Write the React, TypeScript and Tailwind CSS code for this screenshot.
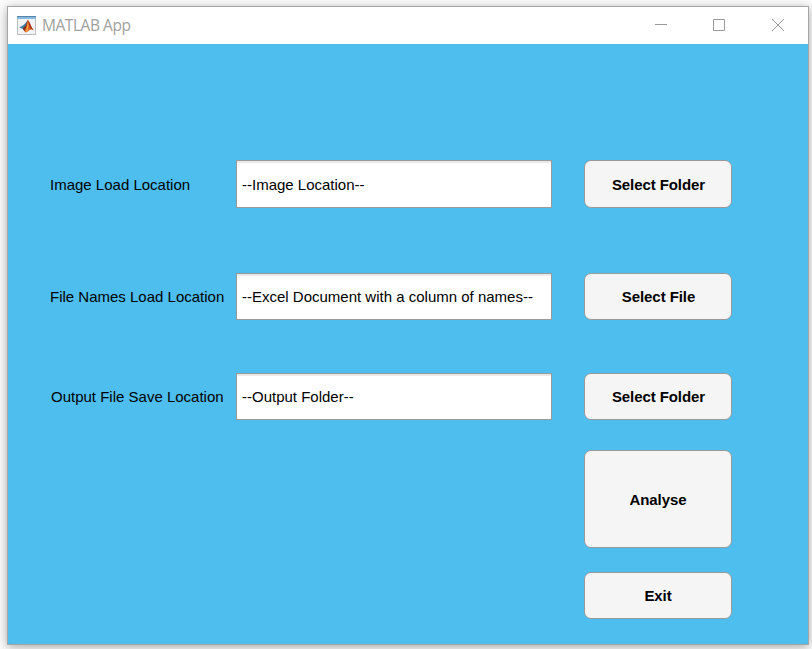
import type { ReactNode } from "react";

function MatlabIcon() {
  return (
    <svg width="19" height="19" viewBox="0 0 19 19" className="shrink-0">
      <rect x="0.5" y="0.5" width="18" height="18" fill="#f2f3f5" stroke="#bcbcbc" />
      <rect x="0" y="0" width="19" height="1" fill="#5585ad" />
      <rect x="0" y="1" width="19" height="2" fill="#8ab8dc" />
      <path d="M2.2 11.4 L6.5 9 L9 6.5 L10.7 4.2 L9.5 10 L7.5 14 L6 13 Z" fill="#3f7fa8" />
      <path d="M5.6 12.8 L8.5 9.5 L10.7 3.8 L11.2 8 L9.5 13 L8.3 16.2 Z" fill="#7d2d20" />
      <path d="M10.7 3.8 C12.8 6 13.8 11.3 16.8 14.2 C14 12.8 12.3 13.8 11 15.6 L8.5 16.5 L7.5 14 C9.5 12.5 10 8 10.7 3.8Z" fill="#df6426" />
      <path d="M10.7 6 L11.2 10 L10.5 15 L8.8 16 C9.8 12 10.3 9 10.7 6Z" fill="#f5b044" />
      <path d="M11 4 C13 6 14 11.3 16.8 14.2 L12.8 12 Z" fill="#a8321c" />
    </svg>
  );
}

function PushButton({ className, children }: { className: string; children: ReactNode }) {
  return (
    <button
      className={`w-[148px] shrink-0 rounded-[7px] border border-[#999] bg-[#f5f5f5] text-[15px] font-bold leading-5 tracking-[-0.08px] text-black ${className}`}
    >
      {children}
    </button>
  );
}

function FileRow({
  label,
  value,
  action,
  className,
  labelClass = "",
  shift = "",
}: {
  label: string;
  value: string;
  action: string;
  className: string;
  labelClass?: string;
  shift?: string;
}) {
  return (
    <div className={`flex items-stretch ${className}`}>
      <div className={`flex w-[186px] shrink-0 items-center whitespace-nowrap ${labelClass} ${shift}`}>{label}</div>
      <div
        className={`mr-8 flex w-[316px] shrink-0 items-center whitespace-nowrap border border-[#999] bg-white pl-[5px] shadow-[inset_0_2px_0_#e9e9e9] ${shift}`}
      >
        {value}
      </div>
      <PushButton className={`pl-px ${shift}`}>{action}</PushButton>
    </div>
  );
}

export default function App() {
  return (
    <div className="h-[649px] w-[812px] overflow-hidden bg-[#fcfcfc] pl-[7px] pt-[6px] font-['Liberation_Sans',Arial,sans-serif] text-[15px] leading-5 text-black">
      <div className="h-[639px] w-[802px] border border-[#a5a5a5] bg-[#4dbeee] shadow-[0_2px_10px_rgba(0,0,0,0.34)]">
        <header className="flex h-[37px] items-center bg-white text-[#999]">
          <div className="ml-[9px]">
            <MatlabIcon />
          </div>
          <h1 className="-mt-px ml-[6px] w-[88px] whitespace-nowrap font-['Open_Sans','Noto_Sans',sans-serif] text-[15.5px] font-normal tracking-[-0.45px] text-[#a0a0a0]">
            MATLAB App
          </h1>
          <svg width="131" height="13" viewBox="0 0 131 13" className="ml-[525px]" fill="none" stroke="#999">
            <path d="M0 5.5H12M58.5 0.5H69.5V11.5H58.5ZM117 0L129 12M129 0L117 12" />
          </svg>
        </header>
        <main className="flex flex-col pl-[42px] pt-[116px]">
          <FileRow
            className="h-12"
            shift="pt-0.5"
            label="Image Load Location"
            value="--Image Location--"
            action="Select Folder"
          />
          <FileRow
            className="mt-[65px] h-[47px]"
            label="File Names Load Location"
            value="--Excel Document with a column of names--"
            action="Select File"
          />
          <FileRow
            className="mt-[53px] h-[47px]"
            labelClass="pl-px"
            label="Output File Save Location"
            value="--Output Folder--"
            action="Select Folder"
          />
          <div className="ml-[534px] flex flex-col">
            <PushButton className="mt-[30px] h-[98px] pt-0.5">Analyse</PushButton>
            <PushButton className="mt-6 h-[47px]">Exit</PushButton>
          </div>
        </main>
      </div>
    </div>
  );
}
